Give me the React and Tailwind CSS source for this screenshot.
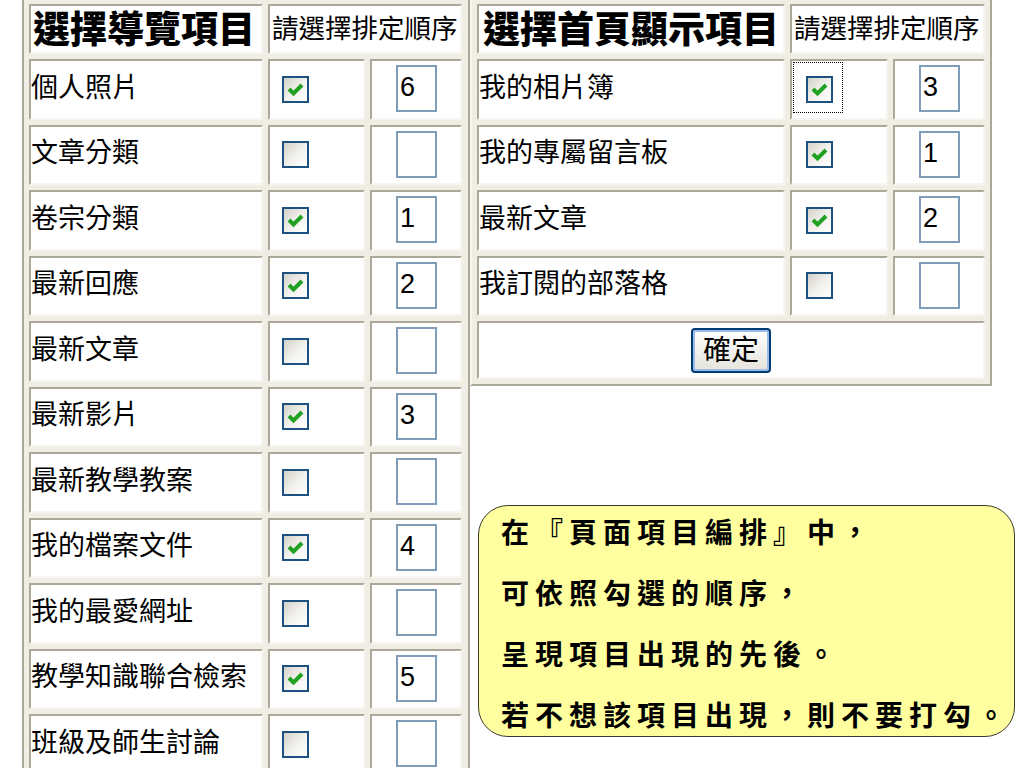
import React from 'react';

const cjk = "font-['Noto_Sans_CJK_TC','Noto_Sans_CJK_SC',sans-serif]";

const navItems = [
  { name: '個人照片', checked: true, order: '6' },
  { name: '文章分類', checked: false, order: '' },
  { name: '卷宗分類', checked: true, order: '1' },
  { name: '最新回應', checked: true, order: '2' },
  { name: '最新文章', checked: false, order: '' },
  { name: '最新影片', checked: true, order: '3' },
  { name: '最新教學教案', checked: false, order: '' },
  { name: '我的檔案文件', checked: true, order: '4' },
  { name: '我的最愛網址', checked: false, order: '' },
  { name: '教學知識聯合檢索', checked: true, order: '5' },
  { name: '班級及師生討論', checked: false, order: '' },
];

const homeItems = [
  { name: '我的相片簿', checked: true, order: '3', focus: true },
  { name: '我的專屬留言板', checked: true, order: '1' },
  { name: '最新文章', checked: true, order: '2' },
  { name: '我訂閱的部落格', checked: false, order: '' },
];

const Cell = ({ className = '', children }) => (
  <div
    className={`bg-white border-2 border-t-[#aca899] border-l-[#aca899] border-r-[#f6f5ef] border-b-[#f6f5ef] ${className}`}
  >
    {children}
  </div>
);

const CheckBox = ({ checked, focus }) => (
  <div className="relative w-[27px] h-[27px]">
    <div className="w-[27px] h-[27px] border-2 border-[#1c5180] bg-linear-to-br from-[#d2d1c9] via-[#f1f0ec] to-white">
      {checked && (
        <svg viewBox="0 0 23 23" className="w-[23px] h-[23px]">
          <polyline points="5,11 9.5,15.5 18,7" fill="none" stroke="#21a121" strokeWidth="4" />
        </svg>
      )}
    </div>
    {focus && (
      <div className="absolute left-[-13px] top-[-14px] w-[50px] h-[51px] border border-dotted border-black" />
    )}
  </div>
);

const OrderBox = ({ value }) => (
  <div className="w-[41px] h-[47px] border-2 border-[#7f9db9] bg-white pl-[2px] pt-[7px] font-['Liberation_Sans',sans-serif] text-[27px] leading-none text-black">
    {value}
  </div>
);

const Row = ({ item, wide }) => (
  <>
    <Cell className={`h-[60.5px] flex items-center pb-[8px] ${cjk} text-[27px] text-black leading-none`}>
      <span className="whitespace-nowrap">{item.name}</span>
    </Cell>
    <Cell className={`h-[60.5px] flex items-center ${wide ? 'pl-[14px]' : 'pl-[12px]'}`}>
      <CheckBox checked={item.checked} focus={item.focus} />
    </Cell>
    <Cell className="h-[60.5px] pl-[24px] pt-[4px]">
      <OrderBox value={item.order} />
    </Cell>
  </>
);

export default function App() {
  return (
    <div className="h-[768px] overflow-hidden bg-white flex items-start">
      {/* left table */}
      <div className="ml-[22px] mt-[-3px] w-[448px] border-2 border-[#aca899] bg-[#efede4] p-[5px] grid grid-cols-[234px_97px_92px] gap-[5px]">
        <Cell className={`h-[50px] flex items-center pl-[2px] pb-[4px] ${cjk} text-[37px] font-black leading-none text-black`}>
          <span className="whitespace-nowrap">選擇導覽項目</span>
        </Cell>
        <Cell className={`col-span-2 h-[50px] flex items-center pl-[2px] pb-[4px] ${cjk} text-[26.5px] leading-none text-black`}>
          <span className="whitespace-nowrap">請選擇排定順序</span>
        </Cell>
        {navItems.map((item) => (
          <Row key={item.name} item={item} />
        ))}
      </div>

      {/* right column */}
      <div className="flex flex-col">
        <div className="mt-[-3px] w-[522px] border-2 border-l-[#f6f5ef] border-t-[#aca899] border-r-[#aca899] border-b-[#aca899] bg-[#efede4] p-[5px] grid grid-cols-[308px_98px_92px] gap-[5px]">
          <Cell className={`h-[50px] flex items-center pl-[4px] pb-[4px] ${cjk} text-[37px] font-black leading-none text-black`}>
            <span className="whitespace-nowrap">選擇首頁顯示項目</span>
          </Cell>
          <Cell className={`col-span-2 h-[50px] flex items-center pl-[2px] pb-[4px] ${cjk} text-[26.5px] leading-none text-black`}>
            <span className="whitespace-nowrap">請選擇排定順序</span>
          </Cell>
          {homeItems.map((item) => (
            <Row key={item.name} item={item} wide />
          ))}
          <Cell className="col-span-3 h-[58px] flex items-center justify-center">
            <button className={`w-[80px] h-[45px] rounded-[4px] border-2 border-[#003c74] bg-linear-to-b from-white to-[#e4e3dc] shadow-[inset_0_0_0_2px_#9dbbe9] pb-[4px] ${cjk} text-[28px] leading-none text-black`}>
              確定
            </button>
          </Cell>
        </div>

        {/* note */}
        <div className={`mt-[119px] ml-[8px] w-[537px] h-[232px] rounded-[30px] border-[1.5px] border-[#3a3a30] bg-[#ffff9f] pl-[22px] ${cjk} text-[28px] font-bold tracking-[6px] leading-[61px] text-black`}>
          <div className="mt-[-5px]">
            <p className="whitespace-nowrap">在『頁面項目編排』中，</p>
            <p className="whitespace-nowrap">可依照勾選的順序，</p>
            <p className="whitespace-nowrap">呈現項目出現的先後。</p>
            <p className="whitespace-nowrap">若不想該項目出現，則不要打勾。</p>
          </div>
        </div>
      </div>
    </div>
  );
}
